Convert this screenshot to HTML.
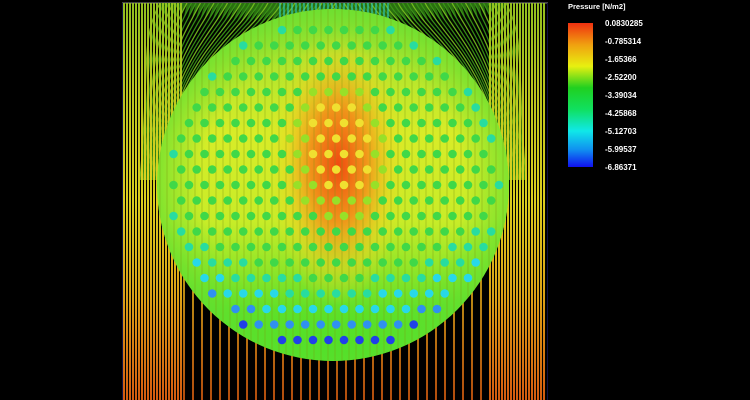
<!DOCTYPE html>
<html><head><meta charset="utf-8"><style>
html,body{margin:0;padding:0;background:#000;width:750px;height:400px;overflow:hidden}
#c{position:absolute;left:0;top:0}
.lab{position:absolute;left:605px;font:bold 8px "Liberation Sans",sans-serif;color:#fff}
</style></head><body>
<svg id="c" width="750" height="400" viewBox="0 0 750 400">
<defs>
<linearGradient id="cbase" x1="0" y1="10" x2="0" y2="362" gradientUnits="userSpaceOnUse">
<stop offset="0" stop-color="#90e030"/><stop offset="0.35" stop-color="#d8ec28"/><stop offset="0.6" stop-color="#c8ec28"/><stop offset="0.85" stop-color="#60e028"/><stop offset="1" stop-color="#40e020"/>
</linearGradient>
<radialGradient id="hot" cx="0.5" cy="0.5" r="0.5">
<stop offset="0" stop-color="#f04a10"/><stop offset="0.4" stop-color="#f48a18" stop-opacity="0.9"/><stop offset="0.75" stop-color="#f0d020" stop-opacity="0.5"/><stop offset="1" stop-color="#e8e020" stop-opacity="0"/>
</radialGradient>
<radialGradient id="edge" cx="333" cy="185" r="176" gradientUnits="userSpaceOnUse">
<stop offset="0.75" stop-color="#60e030" stop-opacity="0"/><stop offset="1" stop-color="#60e030" stop-opacity="0.7"/>
</radialGradient>
<linearGradient id="side" x1="0" y1="0" x2="0" y2="400" gradientUnits="userSpaceOnUse"><stop offset="0" stop-color="#98c820"/><stop offset="0.25" stop-color="#c8d020"/><stop offset="0.5" stop-color="#e8d820"/><stop offset="0.75" stop-color="#e8a818"/><stop offset="1" stop-color="#e06010"/></linearGradient>
<linearGradient id="tg" x1="0" y1="0" x2="0" y2="1"><stop offset="0" stop-color="#2a7010"/><stop offset="1" stop-color="#1a4a08"/></linearGradient>
<linearGradient id="leg" x1="0" y1="0" x2="0" y2="1"><stop offset="0" stop-color="#f03010"/><stop offset="0.15" stop-color="#f0a010"/><stop offset="0.3" stop-color="#e8f010"/><stop offset="0.45" stop-color="#20d020"/><stop offset="0.6" stop-color="#10e060"/><stop offset="0.75" stop-color="#10e8e8"/><stop offset="0.88" stop-color="#1090f0"/><stop offset="1" stop-color="#1010f0"/></linearGradient>
<clipPath id="cc"><circle cx="333" cy="185" r="176"/></clipPath>
<clipPath id="fr"><rect x="123" y="3" width="424" height="397"/></clipPath>
</defs>
<line x1="122" y1="3" x2="548" y2="3" stroke="#888" stroke-width="1"/>
<line x1="122.5" y1="3" x2="122.5" y2="400" stroke="#114" stroke-width="1"/>
<line x1="547.5" y1="3" x2="547.5" y2="400" stroke="#114" stroke-width="1"/>
<path d="M160 3 L506 3 L520 160 L146 160 Z" fill="url(#tg)"/>
<g id="lines" clip-path="url(#fr)"></g>
<circle cx="333" cy="185" r="176" fill="url(#cbase)"/>
<g clip-path="url(#cc)">
<ellipse cx="338" cy="165" rx="70" ry="140" fill="url(#hot)"/>
<circle cx="333" cy="185" r="176" fill="url(#edge)"/>
<g id="sl"></g>
</g>
<g id="dots"></g>
<rect x="568" y="23" width="25" height="144" fill="url(#leg)"/>
<text x="568" y="9" fill="#fff" font-family="Liberation Sans" font-weight="bold" font-size="7.5">Pressure [N/m2]</text>
</svg>
<div class="lab" style="top:19px">0.0830285</div>
<div class="lab" style="top:37px">-0.785314</div>
<div class="lab" style="top:55px">-1.65366</div>
<div class="lab" style="top:73px">-2.52200</div>
<div class="lab" style="top:91px">-3.39034</div>
<div class="lab" style="top:109px">-4.25868</div>
<div class="lab" style="top:127px">-5.12703</div>
<div class="lab" style="top:145px">-5.99537</div>
<div class="lab" style="top:163px">-6.86371</div>
<script>
var ns="http://www.w3.org/2000/svg",L=document.getElementById('lines'),D=document.getElementById('dots'),S=document.getElementById('sl');
function el(t,a,p){var e=document.createElementNS(ns,t);for(var k in a)e.setAttribute(k,a[k]);p.appendChild(e);}
for(var i=0;i<40;i++){
 var x0=160+i*4.5, x1=140+i*1.2;
 el('path',{d:"M"+x0+" 3 C"+(x0-20)+" 40 "+(x1+10)+" 70 "+x1+" 180",stroke:i%3?"#3c9818":"#78c020","stroke-width":1.3,opacity:0.9},L);
 var y0=506-i*4.5, y1=526-i*1.2;
 el('path',{d:"M"+y0+" 3 C"+(y0+20)+" 40 "+(y1-10)+" 70 "+y1+" 180",stroke:i%3?"#3c9818":"#78c020","stroke-width":1.3,opacity:0.9},L);
}
for(var x=280;x<=390;x+=4){el('path',{d:"M"+x+" 3 L"+x+" 40",stroke:"#30c8b8","stroke-width":1.2},L);}
for(var x=124;x<=546;){
 var d=Math.abs(x-333);
 var dense=d>150;
 el('path',{d:"M"+x+" "+(dense?3:200)+" L"+x+" 400",stroke:"url(#side)","stroke-width":dense?2:1.6,opacity:dense?0.95:1},L);
 x+=dense?3:9;
}
for(var x=160;x<=510;x+=7){
 el('path',{d:"M"+x+" 0 L"+x+" 370",stroke:"#7a9a10","stroke-width":1,opacity:0.4},S);
}
for(var r=0;r<22;r++){
 var y=30+r*15.5;
 for(var c=0;c<24;c++){
  var x=158+c*15.5+(r%2?7.7:0);
  var dx=(x-333)/176,dy=(y-185)/176;
  var rr=dx*dx+dy*dy;
  if(rr>0.9)continue;
  var cen=Math.sqrt(Math.pow((x-338)/50,2)+Math.pow((y-150)/75,2));
  var v=0.55*Math.max(0,Math.sqrt(rr)-0.55)+Math.max(0,dy-0.2)*0.6 - (cen<1?0.6*(1-cen):0);
  var col;
  if(v<-0.2)col="#f0e030";else if(v<0)col="#98e028";else if(v<0.2)col="#40d848";else if(v<0.32)col="#28dca0";else if(v<0.45)col="#28d8e8";else if(v<0.55)col="#3090f0";else col="#2040e8";
  el('circle',{cx:x,cy:y,r:4.3,fill:col},D);
 }
}
</script>
</body></html>
